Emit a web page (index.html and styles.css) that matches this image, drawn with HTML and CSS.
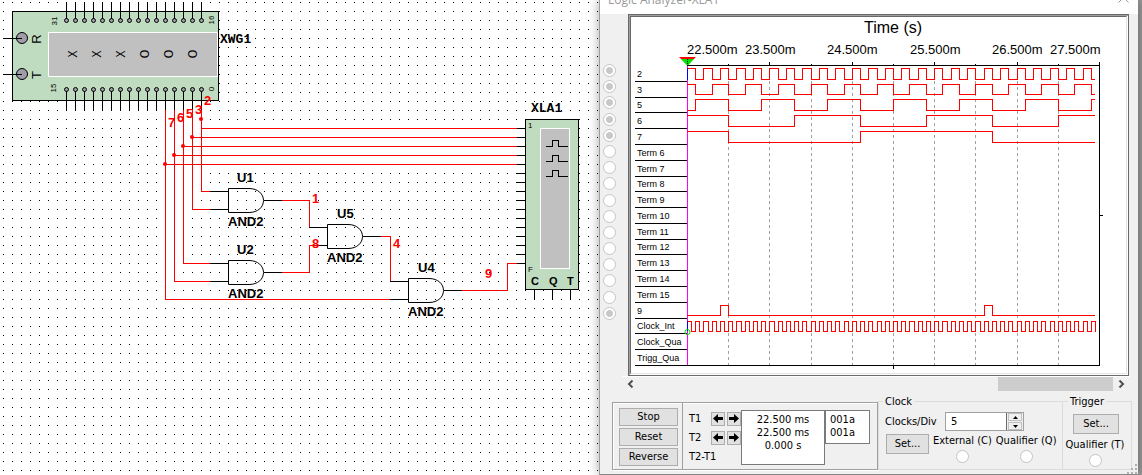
FILE: index.html
```html
<!DOCTYPE html>
<html lang="en">
<head>
<meta charset="utf-8">
<title>Logic Analyzer-XLA1</title>
<link rel="stylesheet" href="styles.css">
</head>
<body>
<main class="desk">
  <section class="schematic" aria-label="Schematic">
    <svg class="sheet" width="100%" height="100%">
      <defs>
        <pattern id="dots" width="9" height="9" patternUnits="userSpaceOnUse"><rect x="3" y="2" width="1" height="1"/></pattern>
        <path id="gate" d="M0.5 0.5H21C30 0.5 35.5 6 35.5 12.5C35.5 19 30 24.5 21 24.5H0.5Z"/>
      </defs>
      <rect width="100%" height="100%" fill="url(#dots)"/>
      <g class="device">
        <rect class="case" x="12.5" y="11.5" width="206" height="89"/>
        <rect class="screen" x="48.5" y="32.5" width="169" height="44"/>
        <path class="lead" d="M3 38.5H17M3 74.5H17"/>
        <circle class="pad" cx="22" cy="38" r="5.5"/>
        <circle class="pad" cx="22" cy="74" r="5.5"/>
        <path class="lead" d="M13 38.5H22M13 74.5H22"/>
        <g id="generator-pins"></g>
        <g class="upright">
          <text transform="translate(41 39) rotate(-90)">R</text>
          <text transform="translate(41 75) rotate(-90)">T</text>
        </g>
        <g class="upright digits">
          <text transform="translate(77 54) rotate(-90)">X</text>
          <text transform="translate(101 54) rotate(-90)">X</text>
          <text transform="translate(125 54) rotate(-90)">X</text>
          <text transform="translate(149 54) rotate(-90)">O</text>
          <text transform="translate(173 54) rotate(-90)">O</text>
          <text transform="translate(197 54) rotate(-90)">O</text>
        </g>
        <g class="upright tiny">
          <text transform="translate(57 21) rotate(-90)">31</text>
          <text transform="translate(214 20) rotate(-90)">16</text>
          <text transform="translate(56 88) rotate(-90)">15</text>
          <text transform="translate(214 89) rotate(-90)">0</text>
        </g>
      </g>
      <g class="device">
        <rect class="case" x="525.5" y="119.5" width="53" height="170"/>
        <rect class="screen" x="540.5" y="128.5" width="29" height="140"/>
        <path class="lead" d="M546 146.5H552.5V140.5H558.5V146.5H568M546 161.5H552.5V155.5H558.5V161.5H568M546 176.5H552.5V170.5H558.5V176.5H568"/>
        <path class="lead" d="M534.5 290V300M552.5 290V300M570.5 290V300"/>
        <g id="analyzer-pins"></g>
        <text class="tiny" x="528" y="128">1</text>
        <text class="tiny" x="528" y="272">F</text>
        <g class="terminal"><text x="531" y="285">C</text><text x="549" y="285">Q</text><text x="567" y="285">T</text></g>
      </g>
      <path class="wire" d="M201.5 110V191.5H210M192.5 110V209.5H210M183.5 110V263.5H210M174.5 110V281.5H210M165.5 110V299.5H390
        M201 128.5H517M192 137.5H517M183 146.5H517M174 155.5H517M165 164.5H517
        M282 200.5H309.5V227M282 272.5H309.5V245.5H317M381 236.5H390.5V281M462 290.5H507.5V263.5H517"/>
      <g class="node"><circle cx="201" cy="119" r="2"/><circle cx="192" cy="137" r="2"/><circle cx="183" cy="146" r="2"/><circle cx="174" cy="155" r="2"/><circle cx="165" cy="164" r="2"/></g>
      <path class="lead" d="M210 191.5H228M210 209.5H228M210 263.5H228M210 281.5H228M264 200.5H282M264 272.5H282M309 227.5H327M317 245.5H327M363 236.5H381M390 281.5H408M390 299.5H408M444 290.5H462"/>
      <g class="gates"><use href="#gate" x="228" y="188"/><use href="#gate" x="228" y="260"/><use href="#gate" x="327" y="224"/><use href="#gate" x="408" y="278"/></g>
      <g class="ref"><text x="220" y="43">XWG1</text><text x="531" y="112">XLA1</text></g>
      <g class="part">
        <text x="237" y="182">U1</text><text x="228" y="226">AND2</text>
        <text x="237" y="254">U2</text><text x="228" y="298">AND2</text>
        <text x="337" y="218">U5</text><text x="327" y="262">AND2</text>
        <text x="418" y="272">U4</text><text x="408" y="316">AND2</text>
      </g>
      <g class="part net">
        <text x="168" y="127">7</text><text x="177" y="122">6</text><text x="186" y="118">5</text><text x="195" y="114">3</text><text x="204" y="105">2</text>
        <text x="312" y="203">1</text><text x="312" y="248">8</text><text x="393" y="248">4</text><text x="485" y="278">9</text>
      </g>
    </svg>
  </section>

  <section class="analyzer" aria-label="Logic Analyzer-XLA1">
    <header class="titlebar">
      <h1 class="title">Logic Analyzer-XLA1</h1>
      <button class="close" type="button" aria-label="Close"><svg width="11" height="11" viewBox="0 0 11 11"><path d="M0.5 0.5L10.5 10.5M10.5 0.5L0.5 10.5"/></svg></button>
    </header>
    <div class="view">
      <div class="channels" id="channels"></div>
      <div class="frame"><div class="well">
        <svg class="plot" viewBox="631 17 495 356" id="plot">
          <text class="heading" x="893" y="33">Time (s)</text>
          <g class="scale">
            <text x="687" y="54">22.500m</text><text x="745" y="54">23.500m</text><text x="827" y="54">24.500m</text>
            <text x="910" y="54">25.500m</text><text x="992" y="54">26.500m</text><text x="1050" y="54">27.500m</text>
          </g>
          <path class="division" d="M728.5 81V365M769.5 81V365M811.5 81V365M852.5 81V365M893.5 81V365M934.5 81V365M975.5 81V365M1017.5 81V365M1058.5 81V365"/>
          <path class="axis" d="M687 65.5H1099.5V62M1099.5 65V365.5H635M728.5 64V65M769.5 62V65M811.5 64V65M852.5 62V65M893.5 64V65M934.5 62V65M975.5 64V65M1017.5 62V65M1058.5 64V65M893.5 365V369M1099 215.5H1103"/>
          <g id="rows"></g>
          <path class="cursor" d="M687.5 62V365"/>
          <g id="waves"></g>
          <path class="start" d="M687.5 68V80M687.5 321V331"/>
          <path fill="#00e000" d="M681 59H694L687.5 66Z"/>
          <path fill="#f00" d="M679 57H696L694 59H681Z"/>
          <path class="tick" d="M687.5 59V66"/>
          <circle class="origin" cx="687.5" cy="332" r="2.5"/>
        </svg>
      </div></div>
    </div>
    <div class="scrollbar">
      <button class="step" type="button" aria-label="Scroll left"><svg width="7" height="8" viewBox="0 0 7 8"><path d="M5.5 0.5L2 4L5.5 7.5"/></svg></button>
      <div class="track"><div class="thumb"></div></div>
      <button class="step" type="button" aria-label="Scroll right"><svg width="7" height="8" viewBox="0 0 7 8"><path d="M1.5 0.5L5 4L1.5 7.5"/></svg></button>
    </div>
    <div class="controls">
      <div class="panel">
        <div class="actions">
          <button class="push" type="button">Stop</button>
          <button class="push" type="button">Reset</button>
          <button class="push" type="button">Reverse</button>
        </div>
        <div class="cursors">
          <span>T1</span>
          <button class="arrow" type="button" aria-label="T1 left"><svg width="10" height="9" viewBox="0 0 10 9"><path d="M0 4.5L5 0V3H10V6H5V9Z"/></svg></button>
          <button class="arrow" type="button" aria-label="T1 right"><svg width="10" height="9" viewBox="0 0 10 9"><path d="M10 4.5L5 0V3H0V6H5V9Z"/></svg></button>
          <span>T2</span>
          <button class="arrow" type="button" aria-label="T2 left"><svg width="10" height="9" viewBox="0 0 10 9"><path d="M0 4.5L5 0V3H10V6H5V9Z"/></svg></button>
          <button class="arrow" type="button" aria-label="T2 right"><svg width="10" height="9" viewBox="0 0 10 9"><path d="M10 4.5L5 0V3H0V6H5V9Z"/></svg></button>
          <span class="delta">T2-T1</span>
        </div>
        <div class="readouts">
          <textarea class="readout times" readonly aria-label="Cursor times">22.500 ms
22.500 ms
0.000 s</textarea>
          <textarea class="readout words" readonly aria-label="Cursor values">001a
001a</textarea>
        </div>
      </div>
      <fieldset class="group clock">
        <legend>Clock</legend>
        <div class="divider-row">
          <label for="div">Clocks/Div</label>
          <div class="spin">
            <input class="number" id="div" type="text" inputmode="numeric" value="5">
            <div class="nudges">
              <button class="nudge" type="button" aria-label="Increase"><svg width="5" height="3" viewBox="0 0 5 3"><path d="M0 3L2.5 0L5 3Z"/></svg></button>
              <button class="nudge" type="button" aria-label="Decrease"><svg width="5" height="3" viewBox="0 0 5 3"><path d="M0 0L2.5 3L5 0Z"/></svg></button>
            </div>
          </div>
        </div>
        <div class="source-row">
          <button class="push set" type="button">Set...</button>
          <label class="option">External (C)<input class="radio" type="radio"></label>
          <label class="option">Qualifier (Q)<input class="radio" type="radio"></label>
        </div>
      </fieldset>
      <fieldset class="group trigger">
        <legend>Trigger</legend>
        <button class="push set" type="button">Set...</button>
        <label class="option">Qualifier (T)<input class="radio" type="radio"></label>
      </fieldset>
    </div>
    <svg class="grip" width="10" height="10" viewBox="0 0 10 10"><path d="M8 0h2v2h-2zM8 4h2v2h-2zM4 4h2v2h-2zM8 8h2v2h-2zM4 8h2v2h-2zM0 8h2v2h-2z"/></svg>
  </section>
</main>
<script src="app.js"></script>
</body>
</html>
```
FILE: styles.css
```css
* { box-sizing: border-box; }
body {
  margin: 0;
  background: #fff;
  color: #000;
  font: 11px/13px "DejaVu Sans Condensed", "DejaVu Sans", sans-serif;
}
button, input, textarea { font: inherit; color: inherit; margin: 0; padding: 0; border-radius: 0; }
.desk { display: flex; min-height: 100vh; overflow: hidden; background: #999; }

/* Schematic sheet */
.schematic { flex: 1 1 0; min-width: 0; display: flex; background: #fff; }
.sheet { display: block; flex: 1; font-family: "Liberation Sans", Arial, sans-serif; }
.case { fill: #c0dcc0; stroke: #000; }
.screen { fill: #c0c0c0; stroke: #fff; }
.case, .screen, .lead, .wire { shape-rendering: crispEdges; }
.lead { fill: none; stroke: #000; }
.wire { fill: none; stroke: #f00; }
.pad { fill: #a09ca8; stroke: #000; }
.node { fill: #f00; }
.gates { fill: none; stroke: #000; }
.upright { font-size: 13px; text-anchor: middle; }
.digits { font: 12px "DejaVu Sans Condensed", sans-serif; }
.tiny { font-size: 8px; }
.terminal { font-size: 11px; font-weight: bold; }
.ref { font: bold 13px "Liberation Mono", monospace; }
.part { font-size: 13px; font-weight: bold; }
.net { fill: #f00; }

/* Analyzer window */
.analyzer {
  position: relative;
  flex: 0 1 539px;
  min-width: 0;
  align-self: flex-start;
  margin-right: 4px;
  padding-bottom: 4px;
  border-left: 1px solid #a0a0a0;
  border-bottom: 1px solid #888;
  background: #f0f0f0;
  box-shadow: 0 0 10px rgba(0, 0, 0, 0.35);
}
.titlebar {
  display: flex;
  justify-content: space-between;
  align-items: flex-end;
  height: 14px;
  padding: 0 9px 7px 8px;
  overflow: hidden;
  background: #fff;
}
.title { margin: 0; color: #999; font: 12px/14px "Open Sans", sans-serif; white-space: nowrap; }
.close { display: flex; padding: 0 0 4px; border: 0; background: none; }
.close path { stroke: #999; fill: none; }

.view { display: grid; grid-template-columns: 28px minmax(0, 1fr); padding-right: 9px; }
.channels {
  display: flex;
  flex-direction: column;
  justify-content: space-between;
  align-items: center;
  padding: 50px 9px 56px 0;
}
.radio {
  appearance: none;
  width: 13px;
  height: 13px;
  flex: none;
  border: 1px solid #c4c4c4;
  border-radius: 50%;
  background: #fff;
}
.radio:checked { background: radial-gradient(circle, #c8c8c8 3px, #fff 4px); }
.frame {
  padding: 1px;
  border: 1px solid #696969;
  background: #fff;
  box-shadow: inset 1px 1px 0 #a0a0a0;
}
.well { border: 1px solid; border-color: #696969 #e3e3e3 #e3e3e3 #696969; }
.plot { display: block; width: 100%; height: auto; font-family: "Liberation Sans", Arial, sans-serif; }
.heading { font-size: 16px; text-anchor: middle; }
.scale { font-size: 13px; }
.division, .axis, .cursor, .start, .tick, .rule, .wave { fill: none; shape-rendering: crispEdges; }
.division { stroke: #a0a0a0; stroke-dasharray: 3 3; }
.axis, .rule { stroke: #000; }
.cursor { stroke: #f0f; }
.start { stroke: #00f; }
.tick { stroke: #000; stroke-dasharray: 1 1; }
.wave { stroke: #f00; }
.origin { fill: none; stroke: #00e000; }
.name { font-size: 9px; }

.scrollbar { display: flex; height: 15px; margin: 0 8px 11px 22px; border-top: 1px solid #fff; }
.step { display: flex; align-items: center; justify-content: center; width: 17px; border: 0; background: none; }
.step path { fill: none; stroke: #505050; stroke-width: 2; }
.track { display: flex; flex: 1; justify-content: flex-end; }
.thumb { width: 115px; background: #cdcdcd; }

.controls { display: flex; padding: 0 6px 0 12px; }
.panel { display: flex; flex: 0 0 auto; width: 266px; border: 1px solid #a0a0a0; box-shadow: inset 1px 1px 0 #fff, 1px 1px 0 #fff; }
.actions { display: flex; flex-direction: column; gap: 2px; width: 69px; padding: 5px 4px 3px 6px; }
.push { height: 18px; border: 1px solid #adadad; background: #e1e1e1; text-align: center; line-height: 14px; }
.cursors {
  display: grid;
  grid-template-columns: 20px 14px 14px;
  grid-template-rows: 19px 19px 18px;
  column-gap: 2px;
  align-items: center;
  padding: 6px 0 0 6px;
  border-left: 1px solid #a0a0a0;
}
.delta { grid-column: 1 / 4; }
.arrow { display: flex; align-items: center; justify-content: center; width: 14px; height: 14px; border: 1px solid #adadad; background: #e1e1e1; }
.readouts { display: flex; align-items: flex-start; padding-top: 7px; }
.readout { display: block; border: 1px solid #7a7a7a; background: #fff; resize: none; overflow: hidden; outline: 0; }
.times { width: 84px; height: 55px; padding-top: 2px; text-align: center; }
.words { width: 45px; height: 34px; padding: 2px 0 0 4px; }

.group { min-width: 0; margin: -7px 0 0; padding: 0; border: 1px solid #dcdcdc; }
.group legend { margin-left: 5px; padding: 0 2px; }
.clock { flex: 1 1 auto; border-right: 0; padding: 4px 0 0 6px; }
.clock legend { margin-left: -2px; }
.trigger { flex: 0 0 auto; width: 70px; padding-top: 6px; }
.divider-row { display: flex; align-items: center; justify-content: space-between; }
.spin { display: flex; width: 79px; height: 19px; margin-right: 38px; border: 1px solid #a0a0a0; }
.number { flex: 1; min-width: 0; padding-left: 5px; border: 1px solid #696969; border-width: 0 1px 0 0; background: #fff; }
.nudges { display: flex; flex-direction: column; gap: 1px; width: 16px; padding: 0 1px; }
.nudge { display: flex; flex: 1; align-items: center; justify-content: center; border: 1px solid #c0c0c0; background: #f0f0f0; }
.source-row { display: flex; gap: 4px; padding: 3px 0 0 1px; }
.set { width: 43px; height: 20px; flex: none; }
.option { display: flex; flex-direction: column; align-items: center; gap: 3px; white-space: nowrap; }
.trigger .set { display: block; width: 46px; margin: 0 auto 4px 10px; }
.trigger .option { padding-right: 4px; }
.grip { position: absolute; right: 1px; bottom: 0; fill: #b0b0b0; }
```
FILE: app.js
```js
const NS = "http://www.w3.org/2000/svg";
function add(parent, tag, attrs, text) {
  const el = document.createElementNS(NS, tag);
  for (const key in attrs) el.setAttribute(key, attrs[key]);
  if (text) el.textContent = text;
  parent.appendChild(el);
}

// Sixteen pins along each long side of the word generator, and down the analyzer.
const generator = document.getElementById("generator-pins");
const inputs = document.getElementById("analyzer-pins");
for (let i = 0; i < 16; i++) {
  const x = 66.5 + 9 * i;
  add(generator, "path", { class: "lead", d: `M${x} 2V20M${x} 89V110` });
  add(generator, "circle", { class: "pad", cx: x, cy: 20.5, r: 2 });
  add(generator, "circle", { class: "pad", cx: x, cy: 89.5, r: 2 });
  add(inputs, "path", { class: "lead", d: `M516 ${128.5 + 9 * i}H525` });
}

const names = ["2", "3", "5", "6", "7"];
for (let i = 6; i < 16; i++) names.push("Term " + i);
names.push("9", "Clock_Int", "Clock_Qua", "Trigg_Qua");

const rows = document.getElementById("rows");
const channels = document.getElementById("channels");
names.forEach((name, i) => {
  const y = Math.round(65 + (300 / 19) * (i + 1));
  add(rows, "path", { class: "rule", d: `M635 ${y + 0.5}H687` });
  add(rows, "text", { class: "name", x: 637, y: y - 4 }, name);
  if (i < 16) {
    const radio = document.createElement("input");
    radio.type = "radio";
    radio.className = "radio";
    radio.disabled = true;
    radio.checked = i < 5 || i === 15;
    radio.setAttribute("aria-label", name);
    channels.appendChild(radio);
  }
});

// Edges are counted in half periods of the fastest channel.
const waves = document.getElementById("waves");
function wave(high, low, startHigh, edges) {
  let up = startHigh;
  let d = `M687 ${(up ? high : low) + 0.5}`;
  edges.forEach((k) => {
    up = !up;
    d += `H${Math.round(687 + 8.24 * k) + 0.5}V${(up ? high : low) + 0.5}`;
  });
  add(waves, "path", { class: "wave", d: d + "H1095" });
}
function every(first, step) {
  const out = [];
  for (let k = first; k < 49.6; k += step) out.push(k);
  return out;
}
wave(68, 79, true, every(1, 1));
wave(84, 94, true, every(1, 2));
wave(99, 110, false, every(1, 4));
wave(115, 126, true, every(5, 8));
wave(131, 142, true, every(5, 16));
wave(305, 315, false, [4, 5, 36, 37]);
wave(321, 331, true, every(0.5, 0.5));
```
